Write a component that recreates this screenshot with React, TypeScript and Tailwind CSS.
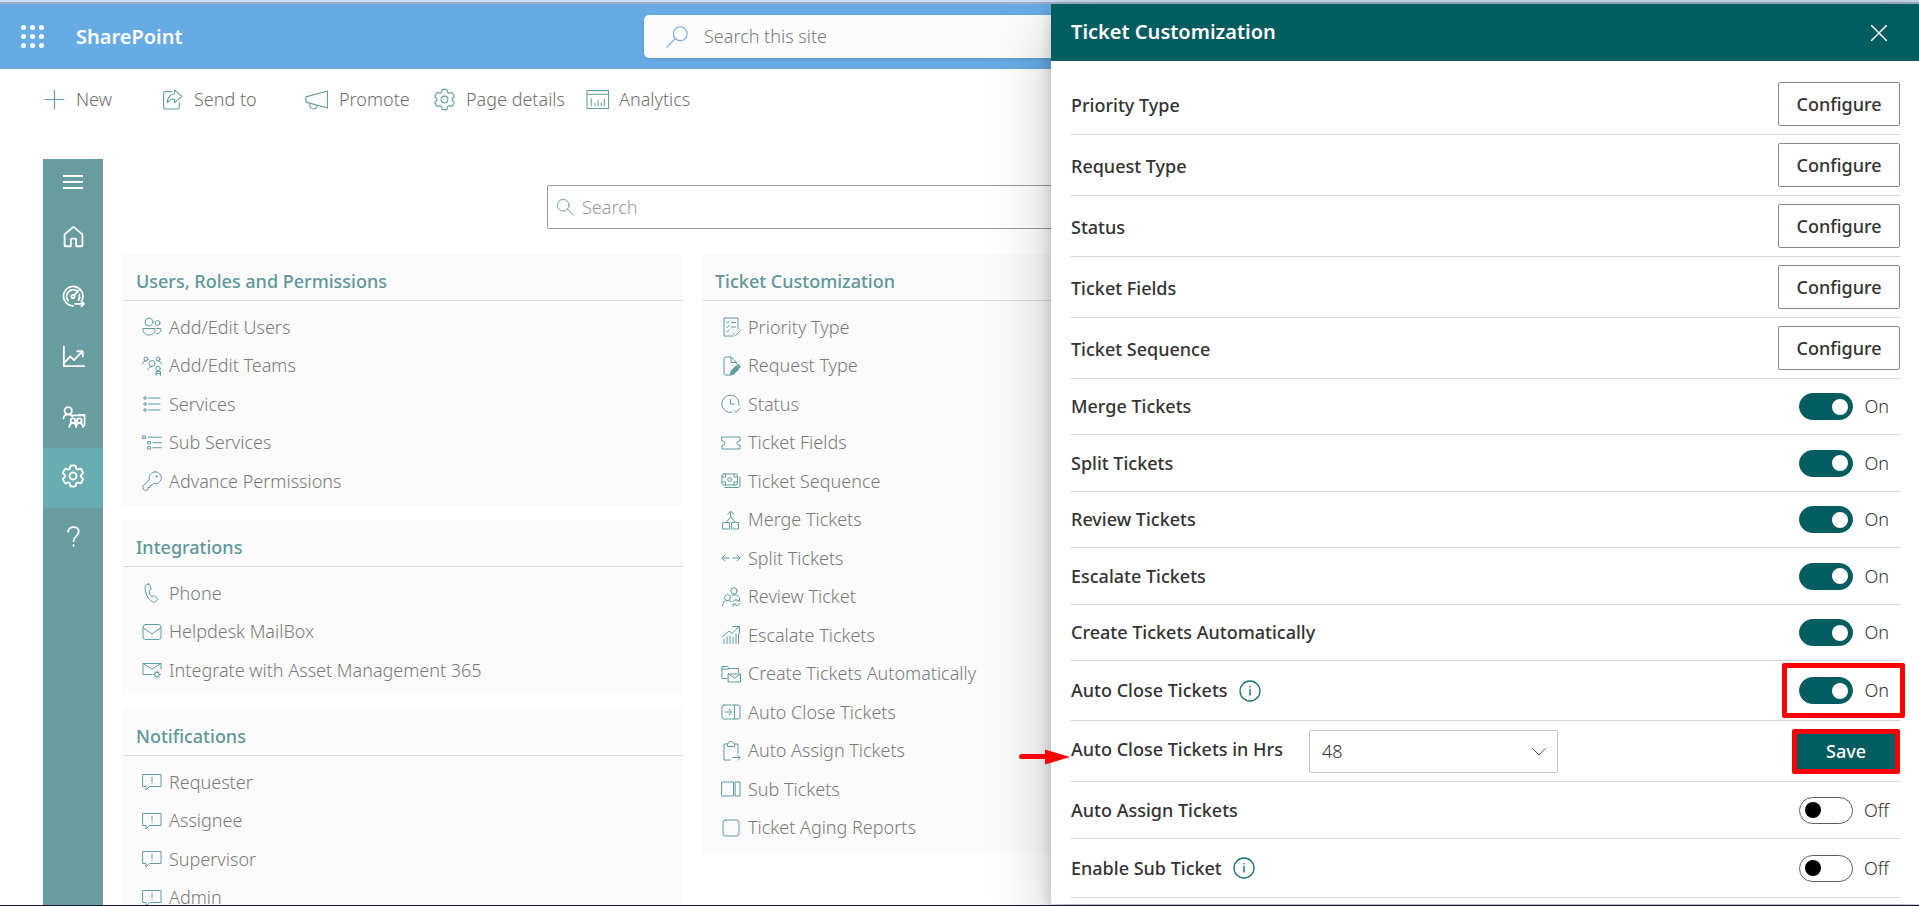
import React, { useState } from "react";
import { HiOutlineCog6Tooth } from "react-icons/hi2";

const strokeProps = {
  fill: "none",
  stroke: "currentColor",
  strokeLinecap: "round" as const,
  strokeLinejoin: "round" as const,
};

// 20x20 outline drawings, keyed by name
const icons: Record<string, React.ReactNode> = {
  users: (
    <>
      <circle cx="7" cy="5" r="4" />
      <circle cx="15.500" cy="6" r="2.500" />
      <path d="M1 11.500h12v1.500c0 3-2.500 5-6 5s-6-2-6-5z" />
      <path d="M14.500 11.500H19v1c0 2.500-1.500 4-4.500 4" />
    </>
  ),
  teams: (
    <>
      <circle cx="4" cy="3" r="2" />
      <circle cx="16" cy="3" r="2" />
      <circle cx="10" cy="7.500" r="3" />
      <circle cx="16" cy="12.500" r="2.200" />
      <path d="M.5 8c.3-2 1.500-3 3.500-3M19.500 8c-.3-2-1.500-3-3.500-3M6 14c.5-2.300 1.800-3.500 4-3.500M14 19.500v-4h4.500v4M14 17.500h4.500" />
    </>
  ),
  list: (
    <>
      <circle cx="3" cy="4" r="1.200" />
      <circle cx="3" cy="10" r="1.200" />
      <circle cx="3" cy="16" r="1.200" />
      <path d="M6.500 4H18M6.500 10H18M6.500 16H18" />
    </>
  ),
  sublist: (
    <path d="M1 3h2.500v2.500H1zM6 8.500h2.500V11H6zM6 13.500h2.500V16H6zM6.500 4.200h13M11 9.700h8.500M11 14.700h8.500" />
  ),
  key: (
    <>
      <path d="M13 .8a6 6 0 0 0-5.700 7.700L1 14.800V18l1.200 1.200h3l.8-.8v-1.900h2v-2.200h2l1.500-1.800A6 6 0 1 0 13 .8z" />
      <circle cx="14.500" cy="5.500" r=".7" />
    </>
  ),
  phone: (
    <path d="M6.500 1 4.800 1.500C3.500 2 3 3.200 3 4.500c.2 6 3 11.500 7.500 14.500 1 .6 2.200.5 3-.2l1.500-1.500c.6-.7.6-1.500 0-2.200l-1.800-1.700c-.5-.5-1.200-.6-1.800-.3l-1.700.7c-1.600-1.500-2.500-3.500-2.700-5.600L8.500 7c.6-.5.8-1.200.5-1.900l-1-3C7.800 1.300 7.200.9 6.500 1z" />
  ),
  mail: (
    <>
      <rect x="1" y="2.500" width="18" height="15" rx="2.500" />
      <path d="m1.500 6 8.500 6 8.500-6" />
    </>
  ),
  mailgear: (
    <>
      <path d="M10 14.500H1v-11h18v5.500M1 3.500 10 9l9-5.500" />
      <circle cx="15" cy="14.500" r="2.300" />
      <path d="M15 10.800v1.300M15 17v1.300M11.500 14.500h1.200M17.300 14.500h1.200M12.600 12l.8.8M16.600 16.200l.8.800M12.600 17l.8-.8M16.600 12.800l.8-.8" />
    </>
  ),
  comment: (
    <path d="M1 2.500h18v12H7.500L4 18v-3.500H1zM10 5v4.500M10 11.500v.5" />
  ),
  checklist: (
    <path d="M17 12V1H3v18h9.500M5.500 5l1 1 1.700-2M5.500 9.500l1 1 1.700-2M5.500 14l1 1 1.700-2M10.500 5.500h4M10.500 10h4M12.500 16.500l2 2 4.500-4.500" />
  ),
  edit: (
    <>
      <path d="M8.500 19H4.500A1.500 1.500 0 0 1 3 17.500v-15A1.500 1.500 0 0 1 4.500 1H10l5.500 5.500v1M10 1v5.500h5.500" />
      <path
        d="m9 19 1.200-4 5-5 2.800 2.800-5 5zM16 9.200l1-1 2.300 2.600-.8 1z"
        fill="currentColor"
      />
    </>
  ),
  clock: (
    <path d="M18 11.500A8.700 8.700 0 1 0 11 18.400M9.500 5.500V10H13M13 16.500l2 2 4-4.500" />
  ),
  ticket: (
    <path d="M1 4h18v4h-1a2 2 0 0 0 0 4h1v4H1v-4h1a2 2 0 0 0 0-4H1z" />
  ),
  money: (
    <>
      <rect x="1" y="3" width="15.500" height="11" rx="1.500" />
      <circle cx="8.700" cy="8.500" r="2" />
      <path d="M4.500 3v3H1M13 3v3h3.500M4.500 14v-3H1M13 14v-3h3.500M19 6v8.500c0 1.200-.8 2-2 2H4" />
    </>
  ),
  merge: (
    <path d="M2 12.500h6.500V19H2zM11 12.500h6.500V19H11zM9.700 1.500V7M6.700 4.200l3-3 3 3M9.700 7 5.500 12M9.700 7l4.300 5" />
  ),
  split: (
    <path d="M8.500 10H1M4 7l-3 3 3 3M11.500 10H19M16 7l3 3-3 3" />
  ),
  review: (
    <>
      <circle cx="13" cy="4" r="3.200" />
      <circle cx="6.500" cy="10.500" r="3" />
      <path d="M1.500 19c.3-3.500 2-5.500 5-5.500 1.300 0 2.300.4 3.200 1.200M11 8.500c2.800-1.500 6.500-.5 7.500 2.500M12 14.500c1-2 4.500-2.500 6-.5M18.500 11.500V14H16M19 16.500c-1 2.500-4.500 3-6 .5M12 19.500V17h2.500" />
    </>
  ),
  escalate: (
    <path d="M1.500 11.500 8 6l3 2.500 7.500-7M11.500 1.500h7V8M3 18.500v-4M6 18.500v-6.500M9 18.500V11M12 18.500V12M15 18.500V9M17.500 18.500V9" />
  ),
  folder: (
    <path d="M6 14.500H1v-12h5.500L8 4.500h9.500V8.500M1 5h6.500M7.500 10h12v8h-12zM7.500 10l6 4 6-4" />
  ),
  close: (
    <>
      <rect x="1" y="3" width="18" height="14" rx="2" />
      <path d="M13.500 3v14M4 10h6.500M8 7.200l2.700 2.800L8 12.800" />
    </>
  ),
  assign: (
    <path d="M9.500 19H3V3h4c0-3.300 6-3.300 6 0h4v9.500M6.500 3v2.500h7V3M11.500 16.500H19M16.500 14l2.500 2.500-2.500 2.500" />
  ),
  columns: <path d="M1 3h11.500v14H1zM14.500 3H19v14h-4.500z" />,
  square: <rect x="2" y="2" width="16" height="16" rx="2.500" />,
  menu: <path d="M0 4h20M0 10h20M0 16h20" strokeLinecap="butt" />,
  home: (
    <path d="M10 .8 1.500 8v10.500c0 .5.4.8.8.8H7.500V13c0-.6.400-1 1-1h3c.6 0 1 .4 1 1v6.300h5.200c.4 0 .8-.3.8-.8V8z" />
  ),
  gauge: (
    <>
      <path d="M9.500 19A9.300 9.300 0 1 1 19 9.500c0 1.500-.3 2.500-.7 3.500M5 14a6.300 6.300 0 0 1 8-9.500M15.500 8c.6 2 .3 4-.8 5.500" />
      <circle cx="9.500" cy="10" r="1.600" />
      <path d="m10.800 8.700 4-4.200M11.500 17H20M17.500 14.500 20 17l-2.500 2.500" />
    </>
  ),
  chart: <path d="M.8.5v18.700H20M1 16l6-6 3.500 3.500L18.500 5M13.500 5h5.300v5" />,
  trainer: (
    <>
      <circle cx="5" cy="4.500" r="3.500" />
      <path d="M.5 12c.2-2.700 2-4 4.500-4 2 0 3.300.7 4 2.200M9 9h11.500v9.500M15 8.500h5.500" />
      <circle cx="9.500" cy="14" r="2.200" />
      <circle cx="15.500" cy="14" r="2.200" />
      <path d="M6 20c.2-2.400 1.500-3.800 3.500-3.800s3 1.400 3 3.800c0-2.400 1-3.800 3-3.800s3.300 1.400 3.500 3.800" />
    </>
  ),
  help: (
    <path d="M5 5.500C5 2.800 7 1 10 1s5 1.800 5 4.500c0 4-5 4.500-5 9M10 18v1" />
  ),
  plus: <path d="M10 1v18M1 10h18" />,
  share: (
    <path d="M9 2.500H3.500a2 2 0 0 0-2 2v12.500a2 2 0 0 0 2 2h11a2 2 0 0 0 2-2v-4M12 1l7 6-7 6V9.500c-3 0-5 1-7 3.500.3-4.500 2.500-8 7-8.500z" />
  ),
  promote: (
    <path d="M19.500 2v16L-1 12.500v-5zM2.500 13.500c-.2 3.500 1.500 5.500 3.800 5.500 2 0 3.200-1.200 3.400-3.300" />
  ),
  analytics: (
    <path d="M0 1.500h20.500V18.500H0zM0 5h20.500M4 9v7M7.500 13.500V16M10.500 11v5M13.500 13v3M16.500 9.500V16" />
  ),
  search: (
    <>
      <circle cx="8" cy="8" r="6.500" />
      <path d="m13 12.500 6 6.500" />
    </>
  ),
  searchFlipped: (
    <>
      <circle cx="13" cy="7" r="6.300" />
      <path d="M8.500 11.500.8 19.200" />
    </>
  ),
};

type IconProps = { name: string; className?: string; weight?: number };

const Icon = ({ name, className = "size-5", weight = 1 }: IconProps) => (
  <svg
    viewBox="0 0 20 20"
    className={`shrink-0 overflow-visible ${className}`}
    strokeWidth={weight}
    aria-hidden="true"
    {...strokeProps}
  >
    {icons[name]}
  </svg>
);

const leftCards = [
  {
    title: "Users, Roles and Permissions",
    items: [
      ["users", "Add/Edit Users"],
      ["teams", "Add/Edit Teams"],
      ["list", "Services"],
      ["sublist", "Sub Services"],
      ["key", "Advance Permissions"],
    ],
  },
  {
    title: "Integrations",
    items: [
      ["phone", "Phone"],
      ["mail", "Helpdesk MailBox"],
      ["mailgear", "Integrate with Asset Management 365"],
    ],
  },
  {
    title: "Notifications",
    items: [
      ["comment", "Requester"],
      ["comment", "Assignee"],
      ["comment", "Supervisor"],
      ["comment", "Admin"],
    ],
  },
];

const ticketCard = {
  title: "Ticket Customization",
  items: [
    ["checklist", "Priority Type"],
    ["edit", "Request Type"],
    ["clock", "Status"],
    ["ticket", "Ticket Fields"],
    ["money", "Ticket Sequence"],
    ["merge", "Merge Tickets"],
    ["split", "Split Tickets"],
    ["review", "Review Ticket"],
    ["escalate", "Escalate Tickets"],
    ["folder", "Create Tickets Automatically"],
    ["close", "Auto Close Tickets"],
    ["assign", "Auto Assign Tickets"],
    ["columns", "Sub Tickets"],
    ["square", "Ticket Aging Reports"],
  ],
};

const Card = ({ title, items }: { title: string; items: string[][] }) => (
  <section className="bg-[#fbfbfb] pb-[6px]">
    <h2 className="flex h-[47px] items-center border-b border-[#dcdcdc] px-[13px] pt-2 text-[18px] font-medium text-[#5f979a]">
      {title}
    </h2>
    <ul className="px-[19px] pt-[7px]">
      {items.map(([icon, label]) => (
        <li key={label} className="flex h-[38px] items-center even:h-[39px]">
          <a href="#" className="flex items-center gap-[7px] text-[18px] font-light text-[#7a7a7a]">
            <Icon name={icon} className="size-5 text-[#5f9da0]" />
            {label}
          </a>
        </li>
      ))}
    </ul>
  </section>
);

const navItems = [
  ["home", "Home"],
  ["gauge", "Dashboard"],
  ["chart", "Reports"],
  ["trainer", "Teams"],
  ["gear", "Settings"],
  ["help", "Help"],
];

const Sidebar = () => (
  <nav className="flex w-[60px] shrink-0 flex-col bg-[#689c9e] text-white">
    <button aria-label="Menu" className="flex h-[49px] items-center justify-center pb-1">
      <Icon name="menu" weight={2} />
    </button>
    {navItems.map(([icon, label]) => (
      <button
        key={icon}
        aria-label={label}
        className={`flex h-[60px] items-center justify-center rounded-[3px] pb-1 ${
          icon === "gear" ? "bg-[#69adb1]" : ""
        }`}
      >
        {icon === "gear" ? (
          <HiOutlineCog6Tooth className="size-[28px]" strokeWidth={1.6} />
        ) : (
          <Icon name={icon} className="size-[21px]" weight={1.7} />
        )}
      </button>
    ))}
  </nav>
);

const commands = [
  ["plus", "New", "w-[118px]"],
  ["share", "Send to", "w-[145px]"],
  ["promote", "Promote", "w-[127px]"],
  ["gear", "Page details", "w-[153px]"],
  ["analytics", "Analytics", "w-[120px]"],
];

const configureRows = [
  "Priority Type",
  "Request Type",
  "Status",
  "Ticket Fields",
  "Ticket Sequence",
];

const toggleRows = [
  "Merge Tickets",
  "Split Tickets",
  "Review Tickets",
  "Escalate Tickets",
  "Create Tickets Automatically",
];

const Toggle = ({ id, initial }: { id: string; initial: boolean }) => {
  const [on, setOn] = useState(initial);
  return (
    <div className="flex items-center gap-[11px] pr-[11px]">
      <input
        id={id}
        type="checkbox"
        role="switch"
        checked={on}
        onChange={() => setOn(!on)}
        className="flex h-[27px] w-[54px] appearance-none items-center rounded-full border border-[#605e5c] bg-white px-[5px] before:size-4 before:rounded-full before:bg-black checked:justify-end checked:border-[#035c5f] checked:bg-[#035c5f] checked:px-1 checked:before:bg-white"
      />
      <span className="text-[18px] font-light text-[#333333]">{on ? "On" : "Off"}</span>
    </div>
  );
};

const InfoIcon = () => (
  <svg viewBox="0 0 22 22" className="size-[22px]" aria-hidden="true" {...strokeProps}>
    <circle cx="11" cy="11" r="10" stroke="#1b6d70" strokeWidth="1.300" />
    <path d="M11 9.500V15M11 6.500v.4" stroke="#1b6d70" strokeWidth="1.400" />
  </svg>
);

const label = "text-[18px] font-medium text-[#333333]";
const row = "flex items-center justify-between border-b border-[#d6d6d6]";

const CustomizationPanel = () => {
  const [hours, setHours] = useState("48");
  return (
    <aside className="absolute top-1 right-0 bottom-px flex w-[868px] max-w-full flex-col bg-white shadow-[0_26px_58px_rgba(0,0,0,0.22),0_5px_14px_rgba(0,0,0,0.18)]">
      <header className="flex h-[57px] shrink-0 items-center justify-between bg-[#035c5f] pr-8 pl-5 text-white">
        <h2 className="pb-[2px] text-[20px] font-semibold">Ticket Customization</h2>
        <button aria-label="Close">
          <svg viewBox="0 0 16 16" className="size-4" strokeWidth="1.500" {...strokeProps}>
            <path d="m.5.5 15 15M15.500.5l-15 15" />
          </svg>
        </button>
      </header>

      <div className="pt-[13px] pr-[19px] pl-5">
        {configureRows.map((name) => (
          <div key={name} className={`${row} h-[61px]`}>
            <span className={`${label} pt-[2px]`}>{name}</span>
            <button className="h-[44px] w-[122px] rounded-[2px] border border-[#8a8886] text-[18px] font-medium text-[#333333]">
              Configure
            </button>
          </div>
        ))}

        {toggleRows.map((name) => (
          <div key={name} className={`${row} h-[56px] odd:h-[57px]`}>
            <label htmlFor={name} className={label}>
              {name}
            </label>
            <Toggle id={name} initial={true} />
          </div>
        ))}

        <div className={`${row} relative h-[60px]`}>
          <div className="flex items-center gap-[11px]">
            <label htmlFor="auto-close" className={label}>
              Auto Close Tickets
            </label>
            <InfoIcon />
          </div>
          <Toggle id="auto-close" initial={true} />
          <div className="pointer-events-none absolute -right-[5px] bottom-[2px] h-[55px] w-[123px] rounded-[2px] border-[5px] border-[#ff0000]" />
        </div>

        <div className={`${row} relative h-[61px]`}>
          <svg
            viewBox="0 0 52 16"
            className="absolute top-[28px] -left-[52px] h-4 w-[52px]"
            aria-hidden="true"
          >
            <path d="M2.500 7.500H28" stroke="#ff0000" strokeWidth="5" strokeLinecap="round" />
            <path d="M26 .5 51 8 26 15.500z" fill="#ff0000" />
          </svg>
          <div className="flex items-center gap-[26px]">
            <label htmlFor="hours" className={`${label} pb-1`}>
              Auto Close Tickets in Hrs
            </label>
            <div className="relative">
              <select
                id="hours"
                value={hours}
                onChange={(e) => setHours(e.target.value)}
                className="h-[43px] w-[249px] appearance-none rounded-[2px] border border-[#c8c6c4] bg-white px-3 text-[18px] font-light text-[#333333]"
              >
                <option>24</option>
                <option>48</option>
                <option>72</option>
              </select>
              <svg
                viewBox="0 0 14 8"
                className="pointer-events-none absolute top-[18px] right-3 h-2 w-[14px] text-[#605e5c]"
                {...strokeProps}
              >
                <path d="m.5.5 6.500 6.500L13.500.5" />
              </svg>
            </div>
          </div>
          <button className="h-[45px] w-[108px] rounded-[2px] border-[5px] border-[#ff0000] bg-[#035c5f] text-[18px] font-medium text-white">
            Save
          </button>
        </div>

        <div className={`${row} h-[57px]`}>
          <label htmlFor="auto-assign" className={label}>
            Auto Assign Tickets
          </label>
          <Toggle id="auto-assign" initial={false} />
        </div>
        <div className={`${row} h-[59px]`}>
          <div className="flex items-center gap-[11px]">
            <label htmlFor="sub-ticket" className={label}>
              Enable Sub Ticket
            </label>
            <InfoIcon />
          </div>
          <Toggle id="sub-ticket" initial={false} />
        </div>
      </div>
    </aside>
  );
};

const App = () => {
  return (
    <div className="relative flex h-screen flex-col overflow-hidden border-b border-[#14143c] bg-white font-['Noto_Sans','Open_Sans',sans-serif]">
      <div className="h-1 shrink-0 border-b-2 border-[#9fafcb] bg-[#cddcf2]" />
      <header className="flex h-[65px] shrink-0 items-center bg-[#67abe5] pl-[21px] text-white">
        <button aria-label="App launcher" className="grid grid-cols-3 gap-x-1 gap-y-[4px]">
          {Array.from({ length: 9 }, (_, i) => (
            <span key={i} className="size-[5px] rounded-full bg-white" />
          ))}
        </button>
        <a href="#" className="ml-8 w-[568px] text-[20px] font-semibold">
          SharePoint
        </a>
        <div className="flex h-[43px] w-[620px] items-center gap-4 rounded-[5px] bg-[#fcfcfc] pl-[22px] text-[#7aa7dc] shadow-sm">
          <Icon name="searchFlipped" className="size-[22px]" />
          <input
            aria-label="Search this site"
            placeholder="Search this site"
            className="flex-1 text-[18px] font-light text-gray-600 outline-none placeholder:text-[#7a7a7a]"
          />
        </div>
      </header>

      <div className="flex h-[60px] shrink-0 items-center pl-11">
        {commands.map(([icon, name, width]) => (
          <button
            key={name}
            className={`flex items-center gap-[11px] text-[18px] font-light text-[#707070] ${width}`}
          >
            {icon === "gear" ? (
              <HiOutlineCog6Tooth className="-mx-[3px] size-[27px] text-[#5f9da0]" strokeWidth={1} />
            ) : (
              <Icon name={icon} className="size-[21px] text-[#5f9da0]" />
            )}
            {name}
          </button>
        ))}
      </div>

      <div className="mt-[30px] flex min-h-0 flex-1 pr-[78px] pl-[43px]">
        <Sidebar />
        <main className="ml-5 flex-1">
          <div className="mx-auto mt-[26px] flex h-[44px] w-[870px] items-center gap-2 rounded-[2px] border border-[#9b9998] pl-2">
            <Icon name="search" className="size-[18px] text-[#5f9da0]" />
            <input
              aria-label="Search"
              placeholder="Search"
              className="flex-1 text-[18px] font-light text-gray-600 outline-none placeholder:text-[#999999]"
            />
          </div>
          <div className="mt-[25px] grid grid-cols-3 items-start gap-[19px]">
            <div className="flex flex-col gap-[14px]">
              {leftCards.map((card) => (
                <Card key={card.title} {...card} />
              ))}
            </div>
            <Card {...ticketCard} />
          </div>
        </main>
      </div>

      <CustomizationPanel />
    </div>
  );
};

export default App;
